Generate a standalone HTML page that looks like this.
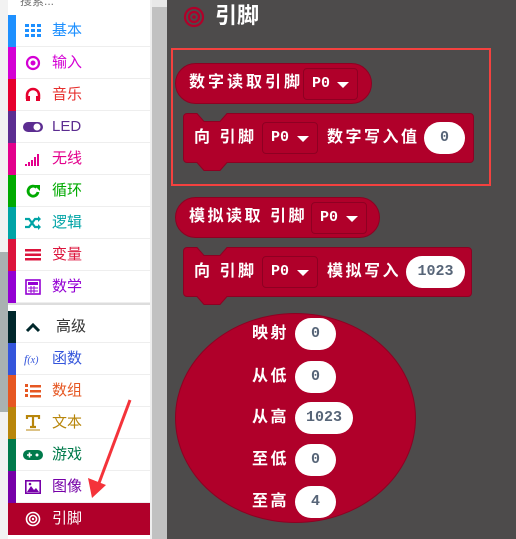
<!DOCTYPE html>
<html><head><meta charset="utf-8"><style>
*{margin:0;padding:0;box-sizing:border-box}
body{width:516px;height:539px;overflow:hidden;position:relative;background:#fff;font-family:"Liberation Sans","Noto Sans CJK SC",sans-serif}
.a{position:absolute}
.row{position:absolute;left:8px;width:142px;height:32px;border-bottom:1px solid #eee;background:#fff}
.bar{position:absolute;left:0;top:0;width:8px;height:32px}
.ic{position:absolute;left:17px;top:8px;width:16px;height:16px}
.tx{position:absolute;left:44px;top:6px;font-size:15px;line-height:20px}
.ws{position:absolute;left:167px;top:0;width:349px;height:539px;background:#4d4b4b}
.blk{position:absolute;background:#b0002a;border:1px solid #8e0022;color:#fff;font-weight:bold;font-size:16px;font-family:"Liberation Sans","Noto Sans CJK SC",sans-serif}
.t{position:absolute;color:#fff;font-weight:bold;font-size:16px;line-height:20px;letter-spacing:2.5px}
.dd{position:absolute;border:1px solid #8e0022;border-radius:4px;height:32px;color:#fff;font:bold 15px "Liberation Mono",monospace;line-height:30px;padding-left:8px}
.dd:after{content:"";position:absolute;right:8px;top:13px;border-left:6px solid transparent;border-right:6px solid transparent;border-top:6px solid #fff}
.pill{position:absolute;background:#fff;border-radius:16px;height:32px;color:#576578;font:bold 15px "Liberation Mono",monospace;line-height:32px;text-align:center}
</style></head><body>
<div class="a" style="left:0;top:0;width:8px;height:539px;background:#f2f2f2"></div>
<div class="a" style="left:0;top:252px;width:8px;height:160px;background:#a9b1b1"></div>
<div class="a" style="left:20px;top:-8px;font-size:12px;color:#777">搜索...</div>
<div class="a" style="left:150px;top:0;width:2px;height:539px;background:#eee"></div>
<div class="a" style="left:152px;top:0;width:15px;height:539px;background:#c1c1c1"></div>
<div class="a" style="left:152px;top:0;width:15px;height:7px;background:#e8e8e8"></div>

<div class="row" style="top:15px"><div class="bar" style="background:#1e90ff"></div>
<svg class="ic" viewBox="0 0 16 16" fill="#1e90ff"><rect x="0" y="1" width="4" height="3"/><rect x="6" y="1" width="4" height="3"/><rect x="12" y="1" width="4" height="3"/><rect x="0" y="6" width="4" height="3"/><rect x="6" y="6" width="4" height="3"/><rect x="12" y="6" width="4" height="3"/><rect x="0" y="11" width="4" height="3"/><rect x="6" y="11" width="4" height="3"/><rect x="12" y="11" width="4" height="3"/></svg>
<div class="tx" style="color:#1e90ff">基本</div></div>
<div class="row" style="top:47px"><div class="bar" style="background:#d400d4"></div>
<svg class="ic" viewBox="0 0 16 16"><circle cx="8" cy="8" r="6" fill="none" stroke="#d400d4" stroke-width="2.2"/><circle cx="8" cy="8" r="2.5" fill="#d400d4"/></svg>
<div class="tx" style="color:#d400d4">输入</div></div>
<div class="row" style="top:79px"><div class="bar" style="background:#e6002e"></div>
<svg class="ic" viewBox="0 0 16 16"><path d="M2 12V8a6 6 0 0 1 12 0v4" fill="none" stroke="#e6002e" stroke-width="2.5"/><rect x="1" y="9" width="4" height="5" fill="#e6002e"/><rect x="11" y="9" width="4" height="5" fill="#e6002e"/></svg>
<div class="tx" style="color:#e6302e">音乐</div></div>
<div class="row" style="top:111px"><div class="bar" style="background:#5c2d91"></div>
<svg class="ic" viewBox="0 0 20 16" style="width:20px;left:15px"><rect x="0" y="3" width="20" height="10" rx="5" fill="#5c2d91"/><circle cx="14" cy="8" r="3.5" fill="#fff"/></svg>
<div class="tx" style="color:#5c2d91">LED</div></div>
<div class="row" style="top:143px"><div class="bar" style="background:#e3008c"></div>
<svg class="ic" viewBox="0 0 16 16" fill="#e3008c"><rect x="0" y="13" width="2" height="2"/><rect x="3" y="11" width="2" height="4"/><rect x="6" y="9" width="2" height="6"/><rect x="9" y="6" width="2" height="9"/><rect x="12" y="3" width="2" height="12"/></svg>
<div class="tx" style="color:#e3008c">无线</div></div>
<div class="row" style="top:175px"><div class="bar" style="background:#00aa00"></div>
<svg class="ic" viewBox="0 0 16 16"><path d="M13 9a5 5 0 1 1-1.5-4.5" fill="none" stroke="#00aa00" stroke-width="2.8"/><path d="M9 2h6v6z" fill="#00aa00"/></svg>
<div class="tx" style="color:#00aa00">循环</div></div>
<div class="row" style="top:207px"><div class="bar" style="background:#00a4a6"></div>
<svg class="ic" viewBox="0 0 16 16"><path d="M0 4h4l6 8h4M0 12h4l6-8h4" fill="none" stroke="#00a4a6" stroke-width="2.2"/><path d="M13 1l3 3-3 3zM13 9l3 3-3 3z" fill="#00a4a6"/></svg>
<div class="tx" style="color:#00a4a6">逻辑</div></div>
<div class="row" style="top:239px"><div class="bar" style="background:#dc143c"></div>
<svg class="ic" viewBox="0 0 16 16" fill="#dc143c"><rect x="0" y="2" width="16" height="2.5"/><rect x="0" y="6.5" width="16" height="2.5"/><rect x="0" y="11" width="16" height="2.5"/></svg>
<div class="tx" style="color:#dc143c">变量</div></div>
<div class="row" style="top:271px"><div class="bar" style="background:#9400d3"></div>
<svg class="ic" viewBox="0 0 16 16"><rect x="1" y="1" width="14" height="14" fill="none" stroke="#9400d3" stroke-width="1.6"/><rect x="3" y="3" width="10" height="3" fill="#9400d3"/><path d="M3 9h10M3 12h10M6 7v7M9 7v7" stroke="#9400d3"/></svg>
<div class="tx" style="color:#9400d3">数学</div></div>
<div class="a" style="left:8px;top:303px;width:142px;height:2px;background:#ddd"></div>
<div class="row" style="top:311px"><div class="bar" style="background:#00272b"></div>
<svg class="ic" viewBox="0 0 16 16"><path d="M2 12l6-6 6 6" fill="none" stroke="#00272b" stroke-width="3"/></svg>
<div class="tx" style="color:#333;left:48px">高级</div></div>
<div class="row" style="top:343px"><div class="bar" style="background:#3455db"></div>
<div class="ic" style="color:#3455db;font:italic 12px 'Liberation Serif',serif;top:9px;left:16px">f<small>(x)</small></div>
<div class="tx" style="color:#3455db">函数</div></div>
<div class="row" style="top:375px"><div class="bar" style="background:#e65722"></div>
<svg class="ic" viewBox="0 0 16 16" fill="#e65722"><rect x="5" y="2" width="11" height="2.5"/><rect x="5" y="7" width="11" height="2.5"/><rect x="5" y="12" width="11" height="2.5"/><rect x="0" y="1" width="3" height="3"/><rect x="0" y="6" width="3" height="3"/><rect x="0" y="11" width="3" height="3"/></svg>
<div class="tx" style="color:#e65722">数组</div></div>
<div class="row" style="top:407px"><div class="bar" style="background:#b8860b"></div>
<svg class="ic" viewBox="0 0 16 16"><path d="M2 4V1h12v3M8 1v11M5 12h6" fill="none" stroke="#b8860b" stroke-width="2.2"/><path d="M1 15h14" stroke="#b8860b"/></svg>
<div class="tx" style="color:#b8860b">文本</div></div>
<div class="row" style="top:439px"><div class="bar" style="background:#007a4b"></div>
<svg class="ic" viewBox="0 0 20 16" style="width:20px;left:15px"><rect x="0" y="3" width="20" height="10" rx="5" fill="#007a4b"/><path d="M4 8h5M6.5 5.5v5" stroke="#fff" stroke-width="1.6"/><circle cx="14" cy="8" r="1.5" fill="#fff"/></svg>
<div class="tx" style="color:#007a4b">游戏</div></div>
<div class="row" style="top:471px"><div class="bar" style="background:#7600a8"></div>
<svg class="ic" viewBox="0 0 16 16"><rect x="0.8" y="1.8" width="14.4" height="12.4" fill="none" stroke="#7600a8" stroke-width="1.6"/><path d="M2 13l4-6 3 4 2-2 3 4z" fill="#7600a8"/><circle cx="5" cy="5" r="1.3" fill="#7600a8"/></svg>
<div class="tx" style="color:#7600a8">图像</div></div>
<div class="row" style="top:503px;background:#b0002a;border:none"><div class="bar" style="background:#b0002a"></div>
<svg class="ic" viewBox="0 0 16 16"><circle cx="8" cy="8" r="6.5" fill="none" stroke="#fff" stroke-width="1.6"/><circle cx="8" cy="8" r="3.5" fill="none" stroke="#fff" stroke-width="1.6"/><circle cx="8" cy="8" r="1.2" fill="#fff"/></svg>
<div class="tx" style="color:#fff">引脚</div></div>

<svg class="a" style="left:0;top:0" width="167" height="539"><path d="M130 400L99 483" stroke="#f4333a" stroke-width="3"/><path d="M92 498L88 478L106 485z" fill="#f4333a"/></svg>

<div class="ws">
<svg class="a" style="left:16px;top:6px" width="22" height="22" viewBox="0 0 22 22"><circle cx="11" cy="11" r="9" fill="none" stroke="#b0002a" stroke-width="2.2"/><circle cx="11" cy="11" r="5" fill="none" stroke="#b0002a" stroke-width="2.2"/><circle cx="11" cy="11" r="1.8" fill="#b0002a"/></svg>
<div class="a" style="left:48px;top:3px;color:#fff;font-weight:bold;font-size:22px;line-height:26px">引脚</div>
<div class="a" style="left:4px;top:48px;width:320px;height:138px;border:2px solid #f4413f"></div>
</div>

<div class="blk" style="left:175px;top:63px;width:197px;height:41px;border-radius:21px"></div>
<div class="t" style="left:189px;top:73px;letter-spacing:3px">数字读取引脚</div>
<div class="dd" style="left:303px;top:68px;width:55px">P0</div>

<svg class="a" style="left:183px;top:113px" width="292" height="60"><path d="M4 .5H14l7 8h16l7-8H287a3.5 3.5 0 0 1 3.5 3.5V46a3.5 3.5 0 0 1-3.5 3.5H44l-7 8H21l-7-8H4A3.5 3.5 0 0 1 .5 46V4A3.5 3.5 0 0 1 4 .5z" fill="#b0002a" stroke="#8e0022"/></svg>
<div class="t" style="left:194px;top:128px">向 引脚</div>
<div class="dd" style="left:262px;top:122px;width:56px">P0</div>
<div class="t" style="left:327px;top:128px">数字写入值</div>
<div class="pill" style="left:424px;top:122px;width:41px">0</div>

<div class="blk" style="left:175px;top:197px;width:205px;height:41px;border-radius:21px"></div>
<div class="t" style="left:189px;top:207px">模拟读取 引脚</div>
<div class="dd" style="left:311px;top:202px;width:56px">P0</div>

<svg class="a" style="left:183px;top:247px" width="292" height="60"><path d="M4 .5H14l7 8h16l7-8H285a3.5 3.5 0 0 1 3.5 3.5V46a3.5 3.5 0 0 1-3.5 3.5H44l-7 8H21l-7-8H4A3.5 3.5 0 0 1 .5 46V4A3.5 3.5 0 0 1 4 .5z" fill="#b0002a" stroke="#8e0022"/></svg>
<div class="t" style="left:194px;top:262px">向 引脚</div>
<div class="dd" style="left:262px;top:256px;width:56px">P0</div>
<div class="t" style="left:327px;top:262px">模拟写入</div>
<div class="pill" style="left:406px;top:256px;width:59px">1023</div>

<div class="blk" style="left:175px;top:313px;width:241px;height:210px;border-radius:50%"></div>
<div class="t" style="left:252px;top:324px">映射</div><div class="pill" style="left:295px;top:318px;width:41px">0</div>
<div class="t" style="left:252px;top:367px">从低</div><div class="pill" style="left:295px;top:361px;width:41px">0</div>
<div class="t" style="left:252px;top:408px">从高</div><div class="pill" style="left:295px;top:402px;width:58px">1023</div>
<div class="t" style="left:252px;top:450px">至低</div><div class="pill" style="left:295px;top:444px;width:41px">0</div>
<div class="t" style="left:252px;top:492px">至高</div><div class="pill" style="left:295px;top:486px;width:41px">4</div>
</body></html>
